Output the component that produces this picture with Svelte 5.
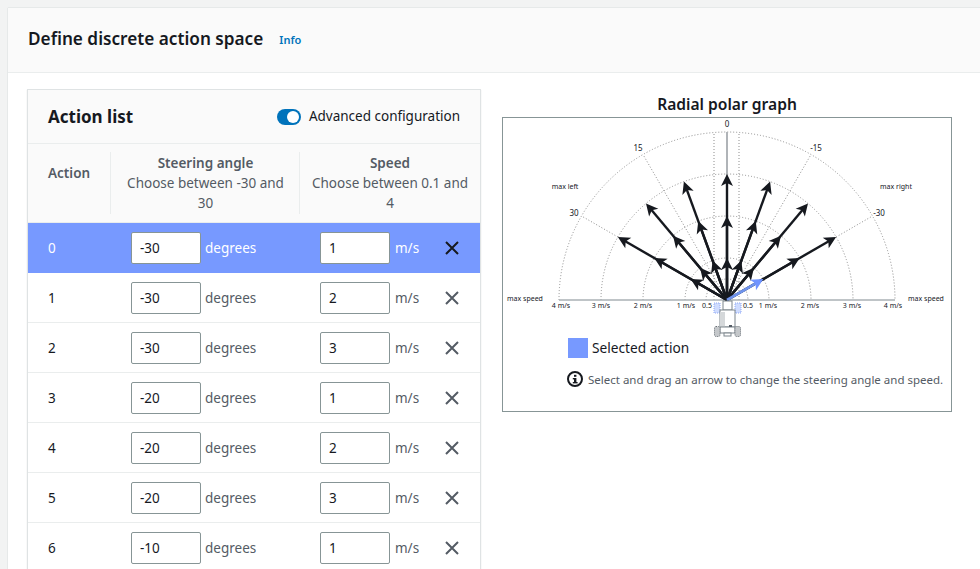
<script>
  const rows = [
    { id: 0, angle: -30, speed: 1 },
    { id: 1, angle: -30, speed: 2 },
    { id: 2, angle: -30, speed: 3 },
    { id: 3, angle: -20, speed: 1 },
    { id: 4, angle: -20, speed: 2 },
    { id: 5, angle: -20, speed: 3 },
    { id: 6, angle: -10, speed: 1 }
  ];

  // graph origin, page coordinates (the svg viewBox is offset to match)
  const cx = 727;
  const cy = 300;
  const unit = 42;

  function pt(deg, r) {
    const a = (deg * Math.PI) / 180;
    return [cx + r * Math.sin(a), cy - r * Math.cos(a)];
  }

  function arc(r) {
    return `M${cx - r} ${cy} A${r} ${r} 0 0 1 ${cx + r} ${cy}`;
  }

  function head(deg, r) {
    const [tx, ty] = pt(deg, r);
    const [bx, by] = pt(deg, r - 12);
    const a = (deg * Math.PI) / 180;
    const nx = Math.cos(a) * 6;
    const ny = Math.sin(a) * 6;
    const [mx, my] = pt(deg, r - 9);
    return `${tx},${ty} ${bx + nx},${by + ny} ${mx},${my} ${bx - nx},${by - ny}`;
  }

  const arrows = [];
  for (const deg of [-60, -40, -20, 0, 20, 40, 60]) {
    for (const s of [3, 2, 1]) {
      if (deg === 60 && s === 1) continue;
      arrows.push({ deg, r: s * unit });
    }
  }

  const spokes = [-60, -30, 30, 60].map((d) => pt(d, 168));
  const tickLabels = [
    ["4 m/s", 561], ["3 m/s", 601], ["2 m/s", 643], ["1 m/s", 686], ["0.5", 707],
    ["0.5", 748], ["1 m/s", 768], ["2 m/s", 810], ["3 m/s", 852], ["4 m/s", 893]
  ];
</script>

<div class="page">
  <section class="panel">
    <header class="panel-head">
      <h2>Define discrete action space</h2>
      <span class="info">Info</span>
    </header>
    <div class="panel-body">
      <div class="list">
        <div class="list-head">
          <h3>Action list</h3>
          <div class="toggle-wrap">
            <span class="toggle"><span class="knob"></span></span>
            <span class="toggle-label">Advanced configuration</span>
          </div>
        </div>
        <div class="row cols-head">
          <div class="th action-th"><b>Action</b></div>
          <div class="th"><div class="th-in"><b>Steering angle</b><span>Choose between -30 and 30</span></div></div>
          <div class="th last"><div class="th-in"><b>Speed</b><span>Choose between 0.1 and 4</span></div></div>
        </div>
        {#each rows as r}
          <div class="row item" class:selected={r.id === 0}>
            <div class="num">{r.id}</div>
            <div class="cell">
              <input type="text" readonly value={r.angle} />
              <span>degrees</span>
            </div>
            <div class="cell speed">
              <input type="text" readonly value={r.speed} />
              <span class="unit">m/s</span>
              <svg class="x" width="16" height="16" viewBox="0 0 16 16">
                <path d="M2 2 L14 14 M14 2 L2 14" fill="none" stroke="currentColor" stroke-width="2" />
              </svg>
            </div>
          </div>
        {/each}
      </div>

      <div class="graph">
        <h4>Radial polar graph</h4>
        <div class="graph-box">
          <svg class="chart" width="448" height="218" viewBox="503 118 448 218">
            <g fill="none" stroke="#8d8d8d" stroke-width="1" stroke-dasharray="1 2">
              {#each [168, 126, 84, 42, 21] as r}
                <path d={arc(r)} />
              {/each}
              {#each spokes as p}
                <line x1={cx} y1={cy} x2={p[0]} y2={p[1]} />
              {/each}
              <line x1="714" y1="134" x2="714" y2={cy} />
              <line x1="739" y1="134" x2="739" y2={cy} />
            </g>
            <line x1={cx} y1="132" x2={cx} y2={cy} stroke="#b0b4b8" stroke-width="2" />
            <line x1="559" y1={cy} x2="895" y2={cy} stroke="#aab0b4" stroke-width="1.5" />

            {#each arrows as a}
              {@const tip = pt(a.deg, a.r - 5)}
              <line x1={cx} y1={cy} x2={tip[0]} y2={tip[1]} stroke="#16191f" stroke-width="2.4" />
              <polygon points={head(a.deg, a.r)} fill="#16191f" />
            {/each}
            <line x1={cx} y1={cy} x2={pt(60, 38)[0]} y2={pt(60, 38)[1]} stroke="#6f93ec" stroke-width="2.6" />
            <polygon points={head(60, 42)} fill="#6f93ff" />

            <g class="veh">
              <rect x="714" y="303" width="6" height="10" fill="#cfdcff" stroke="#8ea8f5" stroke-dasharray="1 1" />
              <rect x="735" y="303" width="6" height="10" fill="#cfdcff" stroke="#8ea8f5" stroke-dasharray="1 1" />
              <rect x="723" y="301" width="9" height="9" fill="#fff" stroke="#7d858c" />
              <rect x="720" y="310" width="15" height="17" fill="#fff" stroke="#7d858c" />
              <rect x="720" y="312" width="5" height="15" fill="#d5d8da" />
              <rect x="720" y="327" width="15" height="6" fill="#fff" stroke="#7d858c" />
              <rect x="724" y="333" width="7" height="3" fill="#fff" stroke="#7d858c" />
              <rect x="714.5" y="326.5" width="5.5" height="10" rx="1.5" fill="#c4c7ca" stroke="#666d74" stroke-dasharray="1 1" />
              <rect x="735" y="326.5" width="5.5" height="10" rx="1.5" fill="#c4c7ca" stroke="#666d74" stroke-dasharray="1 1" />
              <rect x="729" y="325" width="3" height="2" fill="#545b64" />
            </g>

            <g class="lbl">
              <text x="727" y="127" text-anchor="middle">0</text>
              <text x="638" y="151" text-anchor="middle">15</text>
              <text x="816" y="151" text-anchor="middle">-15</text>
              <text x="574" y="216" text-anchor="middle">30</text>
              <text x="879" y="216" text-anchor="middle">-30</text>
            </g>
            <g class="lbl small">
              <text x="565" y="189" text-anchor="middle">max left</text>
              <text x="896" y="189" text-anchor="middle">max right</text>
              <text x="525" y="301" text-anchor="middle">max speed</text>
              <text x="926" y="301" text-anchor="middle">max speed</text>
              {#each tickLabels as t}
                <text x={t[1]} y="308" text-anchor="middle">{t[0]}</text>
              {/each}
            </g>
          </svg>
          <div class="legend">
            <span class="swatch"></span>
            <span>Selected action</span>
          </div>
          <div class="hint">
            <svg width="16" height="16" viewBox="0 0 16 16">
              <circle cx="8" cy="8" r="7" fill="none" stroke="#16191f" stroke-width="2" />
              <rect x="7" y="7" width="2.4" height="5" fill="#16191f" />
              <rect x="5.8" y="7" width="2" height="1.4" fill="#16191f" />
              <rect x="5.8" y="11" width="4.8" height="1.4" fill="#16191f" />
              <rect x="7" y="3.8" width="2.4" height="2" fill="#16191f" />
            </svg>
            <span>Select and drag an arrow to change the steering angle and speed.</span>
          </div>
        </div>
      </div>
    </div>
  </section>
</div>

<style>
  :global(body) {
    margin: 0;
    background: #f2f3f3;
    overflow: hidden;
  }

  .page {
    height: 569px;
    overflow: hidden;
    padding: 8px 0 0 8px;
    box-sizing: border-box;
    font-family: "Noto Sans", sans-serif;
    font-size: 14px;
    color: #16191f;
  }

  .panel {
    background: #fff;
    box-shadow: 0 0 1px #aab7b8;
    min-height: 600px;
  }

  .panel-head {
    height: 65px;
    box-sizing: border-box;
    background: #fafafa;
    border-bottom: 1px solid #eaeded;
    display: flex;
    align-items: center;
    padding: 0 20px 4px;
    gap: 16px;
  }

  h2 {
    margin: 0;
    font-size: 17.2px;
    font-weight: 600;
  }

  .info {
    font-size: 11px;
    font-weight: 600;
    color: #0073bb;
    padding-top: 3px;
  }

  .panel-body {
    display: flex;
    align-items: flex-start;
    padding: 16px 0 0 19px;
  }

  .list {
    width: 452px;
    border: 1px solid #dfe3e4;
    border-bottom: 0;
    box-shadow: 0 1px 1px rgba(0, 28, 36, 0.15);
    flex: none;
  }

  .list-head {
    height: 54px;
    box-sizing: border-box;
    background: #fafafa;
    border-bottom: 1px solid #eaeded;
    display: flex;
    align-items: center;
    justify-content: space-between;
    padding: 0 20px;
  }

  h3 {
    margin: 0;
    font-size: 17px;
    font-weight: 700;
  }

  .toggle-wrap {
    display: flex;
    align-items: center;
    gap: 8px;
    font-size: 13.5px;
    color: #16191f;
  }

  .toggle-label {
    margin-top: -2px;
  }

  .toggle {
    width: 24px;
    height: 16px;
    border-radius: 8px;
    background: #0073bb;
    display: flex;
    align-items: center;
    justify-content: flex-end;
    padding-right: 2px;
    box-sizing: border-box;
  }

  .knob {
    width: 12px;
    height: 12px;
    border-radius: 50%;
    background: #fff;
  }

  .row {
    display: grid;
    grid-template-columns: 83px 189px 180px;
  }

  .cols-head {
    height: 79px;
    box-sizing: border-box;
    background: #fafafa;
    border-bottom: 1px solid #eaeded;
    padding: 8px 0;
    color: #545b64;
    font-size: 13.5px;
    text-align: center;
    line-height: 20px;
  }

  .th {
    border-left: 1px solid #eaeded;
    padding: 1px 11px 0;
    margin-left: -1px;
    display: flex;
    flex-direction: column;
    justify-content: flex-start;
  }

  .th-in b,
  .th-in span {
    display: block;
  }

  .th b {
    font-weight: 600;
  }

  .action-th {
    border-left: 0;
    margin-left: 0;
    padding: 11px 0 0 20px;
    text-align: left;
  }

  .item {
    height: 50px;
    box-sizing: border-box;
    border-bottom: 1px solid #eaeded;
    align-items: center;
    font-size: 13.5px;
    background: #fff;
  }

  .item.selected {
    background: #7799ff;
    color: #fff;
    border-bottom-color: #7799ff;
  }

  .num {
    padding-left: 20px;
  }

  .cell {
    display: flex;
    align-items: center;
    gap: 4px;
    padding-left: 20px;
    color: #545b64;
  }

  .selected .cell {
    color: #fff;
  }

  .unit {
    margin-left: 1px;
  }

  .x {
    margin-left: auto;
    margin-right: 20px;
    color: #545b64;
  }

  .selected .x {
    color: #16191f;
  }

  input {
    width: 70px;
    height: 32px;
    box-sizing: border-box;
    border: 1px solid #879596;
    border-radius: 2px;
    background: #fff;
    padding: 0 8px;
    font: inherit;
    font-size: 13.5px;
    color: #16191f;
    outline: none;
  }

  .graph {
    margin-left: 21px;
    width: 450px;
    flex: none;
    margin-top: 5px;
  }

  h4 {
    margin: 0 0 3px;
    height: 20px;
    line-height: 20px;
    font-size: 15.6px;
    font-weight: 600;
    text-align: center;
    white-space: nowrap;
  }

  .graph-box {
    height: 295px;
    box-sizing: border-box;
    border: 1px solid #879596;
  }

  .chart {
    display: block;
    overflow: visible;
  }

  .lbl text {
    font-size: 8px;
    fill: #16191f;
  }

  .lbl.small text {
    font-size: 7px;
  }

  .legend {
    display: flex;
    align-items: center;
    gap: 4px;
    margin: 2px 0 0 65px;
    font-size: 13.7px;
    line-height: 20px;
  }

  .swatch {
    width: 20px;
    height: 20px;
    background: #7799ff;
  }

  .hint {
    display: flex;
    align-items: center;
    gap: 5px;
    margin: 13px 0 0 64px;
    font-size: 11.5px;
    color: #545b64;
    white-space: nowrap;
  }
</style>
